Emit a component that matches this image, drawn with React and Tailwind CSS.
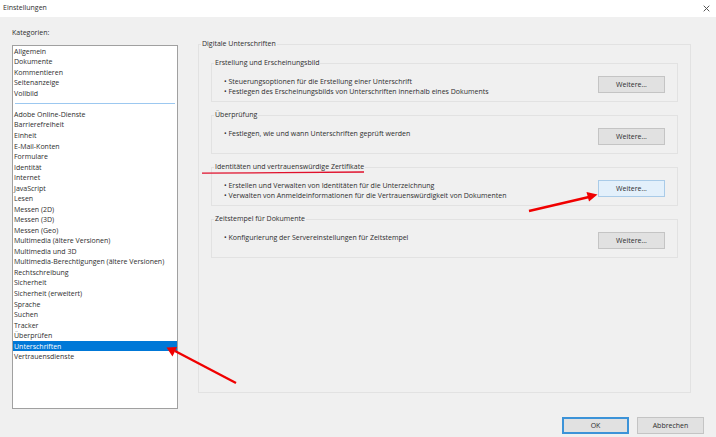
import React, { useState } from 'react';

const generalCategories = ['Allgemein', 'Dokumente', 'Kommentieren', 'Seitenanzeige', 'Vollbild'];

const categories = [
    'Adobe Online-Dienste',
    'Barrierefreiheit',
    'Einheit',
    'E-Mail-Konten',
    'Formulare',
    'Identität',
    'Internet',
    'JavaScript',
    'Lesen',
    'Messen (2D)',
    'Messen (3D)',
    'Messen (Geo)',
    'Multimedia (ältere Versionen)',
    'Multimedia und 3D',
    'Multimedia-Berechtigungen (ältere Versionen)',
    'Rechtschreibung',
    'Sicherheit',
    'Sicherheit (erweitert)',
    'Sprache',
    'Suchen',
    'Tracker',
    'Überprüfen',
    'Unterschriften',
    'Vertrauensdienste'
];

const groups = [
    {
        title: 'Erstellung und Erscheinungsbild',
        points: [
            'Steuerungsoptionen für die Erstellung einer Unterschrift',
            'Festlegen des Erscheinungsbilds von Unterschriften innerhalb eines Dokuments'
        ]
    },
    {
        title: 'Überprüfung',
        points: ['Festlegen, wie und wann Unterschriften geprüft werden']
    },
    {
        title: 'Identitäten und vertrauenswürdige Zertifikate',
        points: [
            'Erstellen und Verwalten von Identitäten für die Unterzeichnung',
            'Verwalten von Anmeldeinformationen für die Vertrauenswürdigkeit von Dokumenten'
        ],
        marked: true
    },
    {
        title: 'Zeitstempel für Dokumente',
        points: ['Konfigurierung der Servereinstellungen für Zeitstempel']
    }
];

const CategoryItem = ({ name, selected, onSelect }) => (
    <li className={`relative flex ${selected ? 'text-white' : ''}`}>
        <button
            type="button"
            onClick={() => onSelect(name)}
            className={`flex-1 flex items-center pl-px text-left leading-none whitespace-nowrap ${selected ? 'bg-[#0078d7]' : ''}`}
        >
            {name}
        </button>
        {selected && (
            <svg className="absolute left-[153px] top-1 z-10 pointer-events-none" width="74" height="42" viewBox="0 0 74 42" aria-hidden="true">
                <path d="M9 6 L70 38" stroke="#f00000" strokeWidth="2.4" />
                <path d="M0.500 2.500 L11 2 L6.500 11.500 Z" fill="#f00000" />
            </svg>
        )}
    </li>
);

const SettingsGroup = ({ title, points, marked }) => (
    <fieldset className="h-11 min-w-0 border border-[#e2e2e2]">
        <legend className="relative ml-[2px] px-px leading-[10px]">
            {title}
            {marked && (
                <svg className="absolute -left-3 top-[9px] w-[162px] h-[3px] pointer-events-none" viewBox="0 0 162 3" aria-hidden="true">
                    <path d="M0 2.200 L80 1.600 L162 1" stroke="#e0102c" strokeWidth="1.3" fill="none" />
                </svg>
            )}
        </legend>
        <div className="flex items-start justify-between pl-3 pr-3 pt-2">
            <ul className="pt-px leading-[10px]">
                {points.map(point => (
                    <li key={point} className="whitespace-nowrap">• {point}</li>
                ))}
            </ul>
            <div className="relative">
                <button
                    type="button"
                    className={`w-[67px] h-[17px] border leading-none ${marked ? 'bg-[#e3f0fb] border-[#a9cbe8]' : 'bg-[#e1e1e1] border-[#c4c4c4]'}`}
                >
                    Weitere...
                </button>
                {marked && (
                    <svg className="absolute right-[67px] top-[11px] pointer-events-none" width="70" height="22" viewBox="0 0 70 22" aria-hidden="true">
                        <path d="M1 20 L61 6" stroke="#f00000" strokeWidth="2.4" />
                        <path d="M69.500 3.500 L58.500 1 L61 10.500 Z" fill="#f00000" />
                    </svg>
                )}
            </div>
        </div>
    </fieldset>
);

export default function App() {
    const [selected, setSelected] = useState('Unterschriften');

    return (
        <div className="min-h-screen flex flex-col bg-[#f0f0f0] text-[#2e2e2e] text-[7px] font-['Open_Sans','Noto_Sans',sans-serif]">
            <header className="h-[17px] flex items-center justify-between pl-[3px] pr-[6px] bg-white">
                <h1>Einstellungen</h1>
                <button type="button" aria-label="Schließen">
                    <svg width="7" height="7" viewBox="0 0 7 7" aria-hidden="true">
                        <path d="M0.700 0.700 L6.300 6.300 M6.300 0.700 L0.700 6.300" stroke="#555555" strokeWidth="1" />
                    </svg>
                </button>
            </header>

            <main className="flex-1 flex gap-5 pl-3 pr-[25px] pt-[11px]">
                <nav className="w-[166px] flex flex-col" aria-labelledby="categories">
                    <h2 id="categories" className="leading-[10px] mb-[7px]">Kategorien:</h2>
                    <div className="flex-1 bg-white border border-[#a0a0a0]">
                        <ul className="h-[316px] grid auto-rows-fr">
                            {generalCategories.map(name => (
                                <CategoryItem key={name} name={name} selected={selected === name} onSelect={setSelected} />
                            ))}
                            <li className="flex items-center px-[2px]" role="separator">
                                <span className="flex-1 h-px bg-[#9cc8f0]" />
                            </li>
                            {categories.map(name => (
                                <CategoryItem key={name} name={name} selected={selected === name} onSelect={setSelected} />
                            ))}
                        </ul>
                    </div>
                </nav>

                <fieldset className="flex-1 min-w-0 mt-[11px] mb-4 border border-[#e2e2e2]">
                    <legend className="ml-[2px] px-px leading-[10px]">Digitale Unterschriften</legend>
                    <div className="flex flex-col gap-2 pl-3 pr-3 pt-[9px]">
                        {groups.map(group => (
                            <SettingsGroup key={group.title} {...group} />
                        ))}
                    </div>
                </fieldset>
            </main>

            <footer className="flex justify-end gap-2 pt-2 pb-[3px] pr-3">
                <button type="button" className="w-[67px] h-[17px] bg-[#e1e1e1] border-2 border-[#3c93d8] leading-none">OK</button>
                <button type="button" className="w-[67px] h-[17px] bg-[#e1e1e1] border border-[#c4c4c4] leading-none">Abbrechen</button>
            </footer>
        </div>
    );
}
